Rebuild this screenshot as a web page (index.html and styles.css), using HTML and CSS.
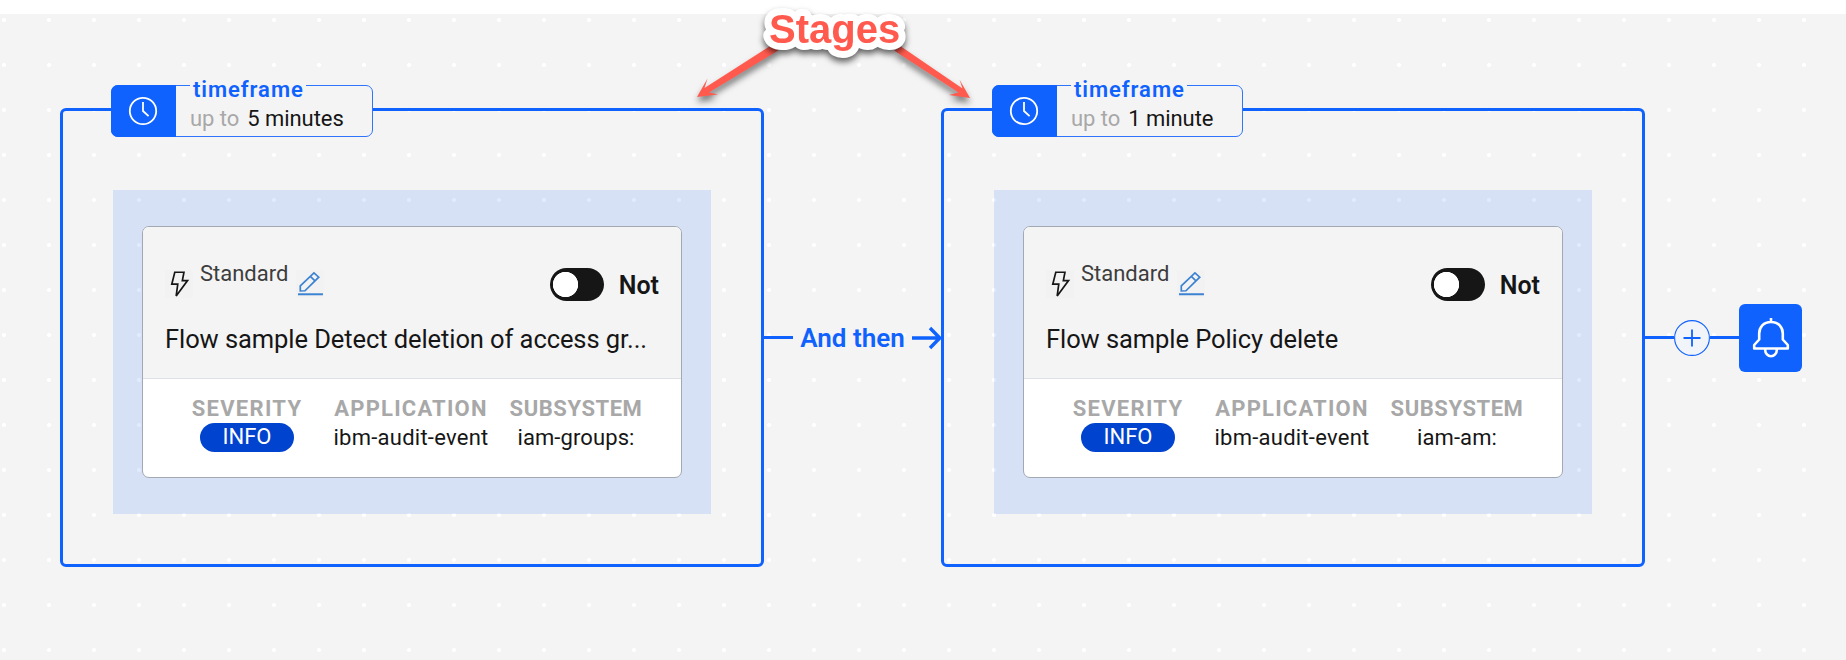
FILE: index.html
```html
<!DOCTYPE html>
<html lang="en">
<head>
<meta charset="utf-8">
<title>Flow stages</title>
<link rel="stylesheet" href="styles.css">
</head>
<body>
<svg class="defs" width="0" height="0">
  <symbol id="clock" viewBox="0 0 30 30"><circle cx="15" cy="15" r="13.2"/><path d="M15 6v9l5.6 5.2"/></symbol>
  <symbol id="bolt" viewBox="0 0 28 28"><path d="M9.8 2.2H19l-1.6 8.4h5.2L11.2 26l1.6-11.8H6.8z"/></symbol>
  <symbol id="pencil" viewBox="0 0 28 28"><path d="M4.3 21v-5.2L18 2.8l4.8 4.4L9 20.8zM14.4 6.4l4.6 4.4"/><path class="pencil-base" d="M2 24.3h25"/></symbol>
</svg>
<main class="canvas">
  <section class="stage">
    <div class="timeframe timeframe-long">
      <div class="timeframe-icon"><svg width="30" height="30"><use href="#clock"/></svg></div>
      <span class="timeframe-label">timeframe</span>
      <p class="timeframe-value"><span class="muted">up to</span><span>5 minutes</span></p>
    </div>
    <div class="selection">
      <article class="card">
        <header class="card-head">
          <div class="card-top">
            <svg class="tile" width="28" height="28"><use href="#bolt"/></svg>
            <span class="kind">Standard</span>
            <svg class="tile edit" width="28" height="28"><use href="#pencil"/></svg>
            <span class="toggle"></span>
            <span class="not">Not</span>
          </div>
          <h2 class="title">Flow sample Detect deletion of access gr...</h2>
        </header>
        <dl class="facts">
          <div class="fact"><dt class="sev">SEVERITY</dt><dd class="pill">INFO</dd></div>
          <div class="fact"><dt class="app">APPLICATION</dt><dd class="app-value">ibm-audit-event</dd></div>
          <div class="fact"><dt class="sub">SUBSYSTEM</dt><dd class="sub-value">iam-groups:</dd></div>
        </dl>
      </article>
    </div>
  </section>

  <div class="link">
    <span class="line"></span>
    <span class="link-text">And then</span>
    <svg class="arrow" width="29" height="24"><path d="M0 12h27M18 2l9.8 10L18 22"/></svg>
  </div>

  <section class="stage">
    <div class="timeframe timeframe-short">
      <div class="timeframe-icon"><svg width="30" height="30"><use href="#clock"/></svg></div>
      <span class="timeframe-label">timeframe</span>
      <p class="timeframe-value"><span class="muted">up to</span><span>1 minute</span></p>
    </div>
    <div class="selection">
      <article class="card">
        <header class="card-head">
          <div class="card-top">
            <svg class="tile" width="28" height="28"><use href="#bolt"/></svg>
            <span class="kind">Standard</span>
            <svg class="tile edit" width="28" height="28"><use href="#pencil"/></svg>
            <span class="toggle"></span>
            <span class="not">Not</span>
          </div>
          <h2 class="title">Flow sample Policy delete</h2>
        </header>
        <dl class="facts">
          <div class="fact"><dt class="sev">SEVERITY</dt><dd class="pill">INFO</dd></div>
          <div class="fact"><dt class="app">APPLICATION</dt><dd class="app-value">ibm-audit-event</dd></div>
          <div class="fact"><dt class="sub">SUBSYSTEM</dt><dd class="sub-value">iam-am:</dd></div>
        </dl>
      </article>
    </div>
  </section>

  <div class="finish">
    <span class="line"></span>
    <svg class="plus" width="36" height="36"><circle cx="18" cy="18" r="17.4"/><path d="M9.5 18h17M18 9.5v17"/></svg>
    <span class="line"></span>
    <div class="alert"><svg width="38" height="42"><path d="M19 1v4M19 5C11.500 5 7.200 10 7.200 16.500V22.500L2.200 28V31.500H35.800V28L30.800 22.500V16.500C30.800 10 26.500 5 19 5ZM13.200 31.500V33a5.800 6.200 0 0 0 11.600 0V31.500"/></svg></div>
  </div>

  <svg class="callout" width="320" height="130" viewBox="670 0 320 130">
    <g class="callout-arrows">
      <path d="M772.500 44.500L704.500 88 707.500 78.500 697 97 718 94.500 709 92.500 779 50Z"/>
      <path d="M894 50.500L958.500 92.500 949 95 970 98 959.500 79.500 962.500 88.500 901 46.500Z"/>
    </g>
    <text class="callout-text" x="769" y="43">Stages</text>
  </svg>
</main>
</body>
</html>
```
FILE: styles.css
```css
* { box-sizing: border-box; }

body {
  margin: 0;
  padding-top: 14px;
  background: #fff;
  font-family: Roboto, "Noto Sans", sans-serif;
  color: #161616;
}

p, h2, dl, dd { margin: 0; }

.defs { position: absolute; }

.canvas {
  display: flex;
  align-items: flex-start;
  height: 646px;
  padding: 94px 0 0 60px;
  background: radial-gradient(circle at 4px 6px, #fff 1.7px, rgba(255, 255, 255, 0) 2.4px) 0 0 / 45px 45px #f4f4f4;
}

.stage {
  position: relative;
  flex: none;
  width: 704px;
  height: 459px;
  padding: 79px 50px;
  border: 3px solid #0f62fe;
  border-radius: 6px;
}

.timeframe {
  position: absolute;
  top: -26px;
  left: 48px;
  display: flex;
  height: 52px;
  border: 1px solid #2f74fd;
  border-radius: 7px;
  background: #f4f4f4;
}
.timeframe-long { width: 262px; }
.timeframe-short { width: 251px; }

.timeframe-icon {
  display: flex;
  align-items: center;
  justify-content: center;
  width: 65px;
  margin: -1px 0 -1px -1px;
  padding-right: 1px;
  border-radius: 7px 0 0 7px;
  background: #0f62fe;
}

.timeframe-icon svg { fill: none; stroke: #fff; stroke-width: 1.8; }

.timeframe-label {
  position: absolute;
  top: -10px;
  left: 78px;
  width: 116px;
  padding-left: 3px;
  background: #f4f4f4;
  color: #0f62fe;
  font-size: 22px;
  font-weight: 600;
  line-height: 28px;
  letter-spacing: .95px;
}

.timeframe-value {
  padding: 19px 0 0 14px;
  font-size: 22px;
  line-height: 28px;
  letter-spacing: -.05px;
  white-space: nowrap;
}

.muted { color: #a8a8a8; margin-right: 8px; }

.selection {
  width: 598px;
  height: 324px;
  padding: 36px 29px;
  background: rgba(15, 98, 254, .127);
}

.card {
  width: 540px;
  height: 252px;
  overflow: hidden;
  border: 1px solid #a2a9b0;
  border-radius: 7px;
  background: #fff;
}

.card-head {
  height: 152px;
  padding: 39px 22px 0;
  border-bottom: 1px solid #dde1e6;
  background: #f4f4f4;
}

.card-top { display: flex; height: 56px; }

.tile {
  margin-top: 4px;
  background: #f2f2f2;
  fill: none;
  stroke: #161616;
  stroke-width: 1.7;
}
.edit { margin-left: 8px; stroke: #3c82d2; }
.pencil-base { stroke-width: 2; }

.kind {
  width: 88px;
  margin-top: -3px;
  margin-left: 7px;
  color: #3d3d3d;
  font-size: 22px;
  line-height: 22px;
}

.toggle {
  width: 54px;
  height: 33px;
  margin: 2px 15px 0 226px;
  border-radius: 17px;
  background: radial-gradient(circle at 15.5px 16.500px, #fff 12.3px, #161616 13px);
}

.not {
  margin-top: 6px;
  font-size: 25px;
  font-weight: 600;
  line-height: 28px;
}

.title {
  overflow: hidden;
  font-size: 25.500px;
  font-weight: 400;
  line-height: 34px;
  letter-spacing: -.08px;
  white-space: nowrap;
}

.facts { display: flex; padding: 16px 0 0 47px; }

.fact {
  display: flex;
  flex-direction: column;
  align-items: center;
  width: 114px;
  font-size: 22px;
  line-height: 28px;
  white-space: nowrap;
}
.fact + .fact { width: 156px; margin-left: 29px; }
.fact + .fact + .fact { width: 132px; margin-left: 21px; }

.fact dt { color: #a8a8a8; font-weight: 700; }
.fact dt.sev { letter-spacing: 1.3px; }
.fact dt.app { letter-spacing: 1.2px; }
.fact dt.sub { letter-spacing: .55px; }

.app-value { padding-top: 1px; letter-spacing: .25px; }
.sub-value { padding-top: 1px; letter-spacing: .1px; }

.pill {
  width: 94px;
  height: 29px;
  border-radius: 15px;
  background: #0043ce;
  color: #fff;
  text-align: center;
}

.link {
  display: flex;
  align-items: center;
  width: 177px;
  height: 459px;
}

.line {
  flex: none;
  width: 29px;
  height: 3px;
  background: #0f62fe;
}

.link-text {
  width: 119px;
  padding-top: 1px;
  color: #0f62fe;
  font-size: 26px;
  font-weight: 600;
  line-height: 30px;
  text-align: center;
  white-space: nowrap;
}

.arrow { fill: none; stroke: #0f62fe; stroke-width: 3.4; }

.finish {
  display: flex;
  align-items: center;
  height: 459px;
}

.plus { background: radial-gradient(circle, #f1f4f8 17px, rgba(244, 244, 244, 0) 18px); fill: none; stroke: #0f62fe; }
.plus circle { stroke-width: 1.1; }
.plus path { stroke-width: 1.8; }

.alert {
  display: flex;
  align-items: center;
  justify-content: center;
  width: 63px;
  height: 68px;
  border-radius: 6px;
  background: #0f62fe;
}

.alert svg { fill: none; stroke: #fff; stroke-width: 2.600; stroke-linejoin: round; }

/* Annotation drawn over the canvas */
.callout { position: absolute; top: 0; left: 670px; }

.callout-arrows { fill: #ff5a4d; filter: drop-shadow(0 5px 3px rgba(0, 0, 0, .5)); }

.callout-text {
  fill: #ff5a4d;
  stroke: #fff;
  stroke-width: 14px;
  stroke-linejoin: round;
  paint-order: stroke;
  font: 700 40px "Liberation Sans", Arial, sans-serif;
  filter: drop-shadow(0 4px 3px rgba(0, 0, 0, .6));
}
```
